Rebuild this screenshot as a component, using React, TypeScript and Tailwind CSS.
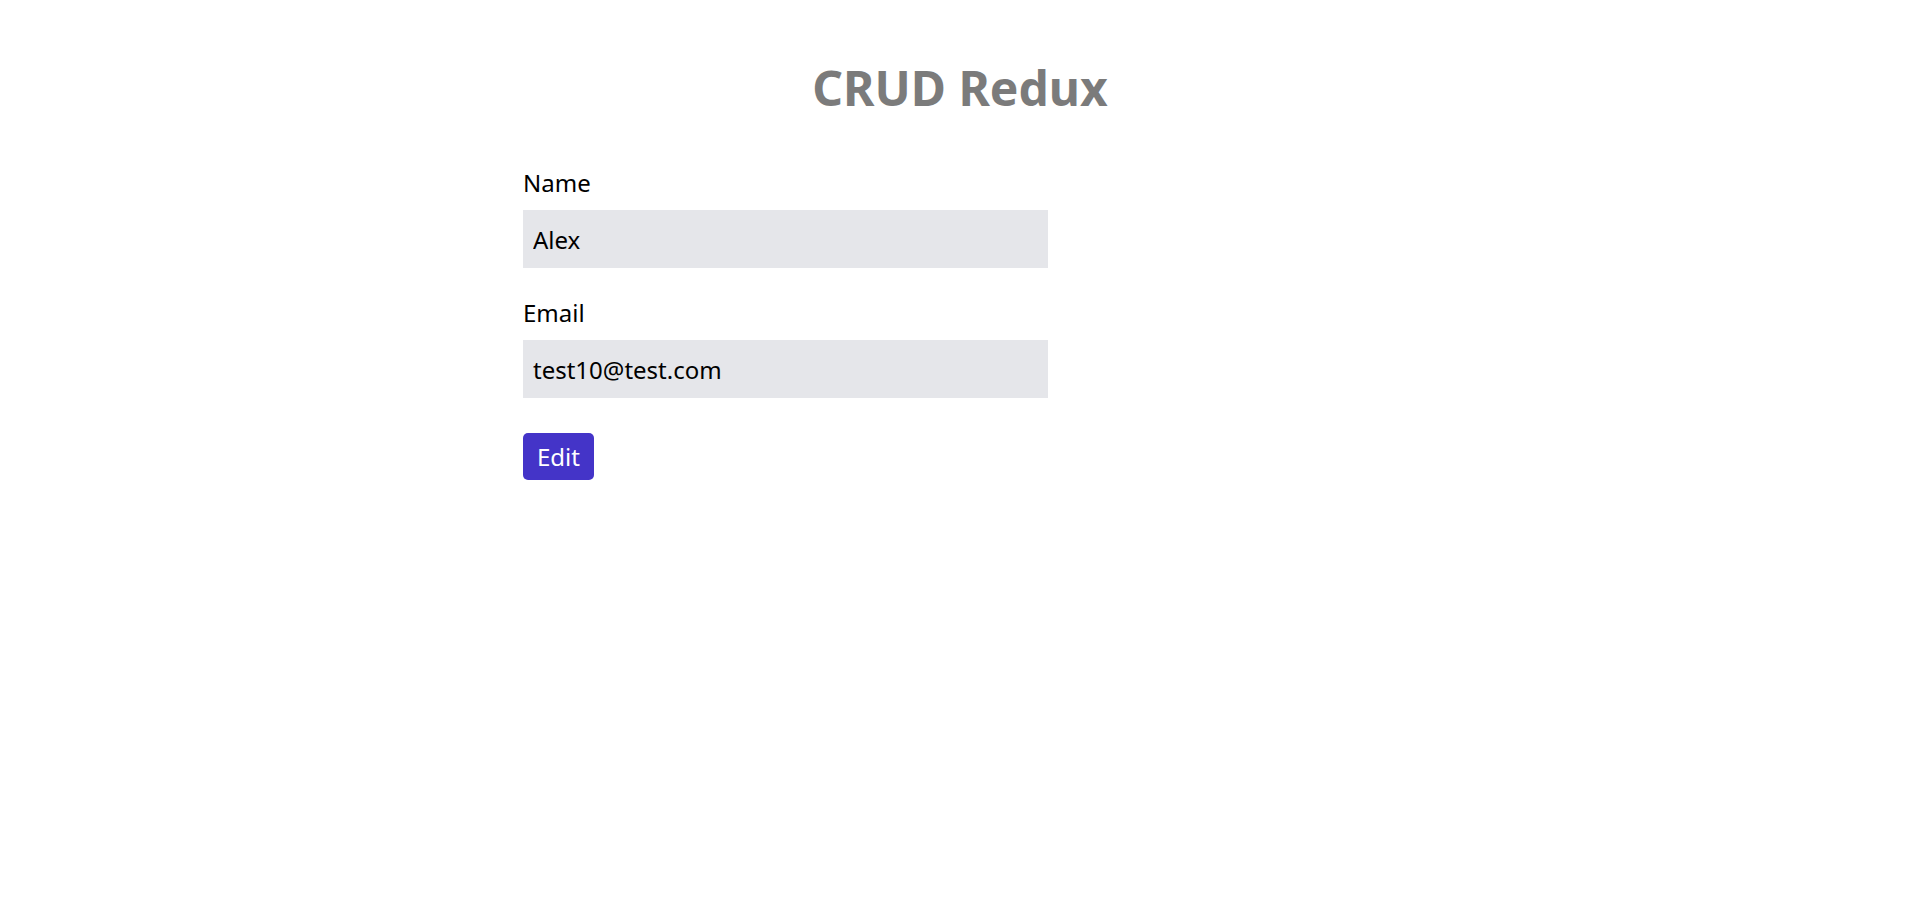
import React from "react";

export default function App() {
  return (
    <div className="min-h-[918px] w-full bg-white" style={{ fontFamily: '"Noto Sans", "Open Sans", sans-serif' }}>
      <h1 className="pt-[64px] text-center text-[48px] leading-[48px] font-bold text-[#7b7b7b]">CRUD Redux</h1>
      <div className="mx-auto mt-[55px] w-[874px]">
        <form className="flex w-[525px] flex-col" onSubmit={(e) => e.preventDefault()}>
          <label className="mb-[11px] text-2xl leading-8 text-black">Name</label>
          <input
            className="h-[58px] w-full bg-[#e5e6ea] px-[10px] text-2xl leading-8 text-black outline-none"
            defaultValue="Alex"
          />
          <label className="mt-[29px] mb-[11px] text-2xl leading-8 text-black">Email</label>
          <input
            className="h-[58px] w-full bg-[#e5e6ea] px-[10px] text-2xl leading-8 text-black outline-none"
            defaultValue="test10@test.com"
          />
          <div className="mt-[35px]">
            <button
              type="submit"
              className="h-[47px] w-[71px] rounded-[5px] bg-[#4434c8] text-center text-2xl leading-8 text-white"
            >
              Edit
            </button>
          </div>
        </form>
      </div>
    </div>
  );
}
